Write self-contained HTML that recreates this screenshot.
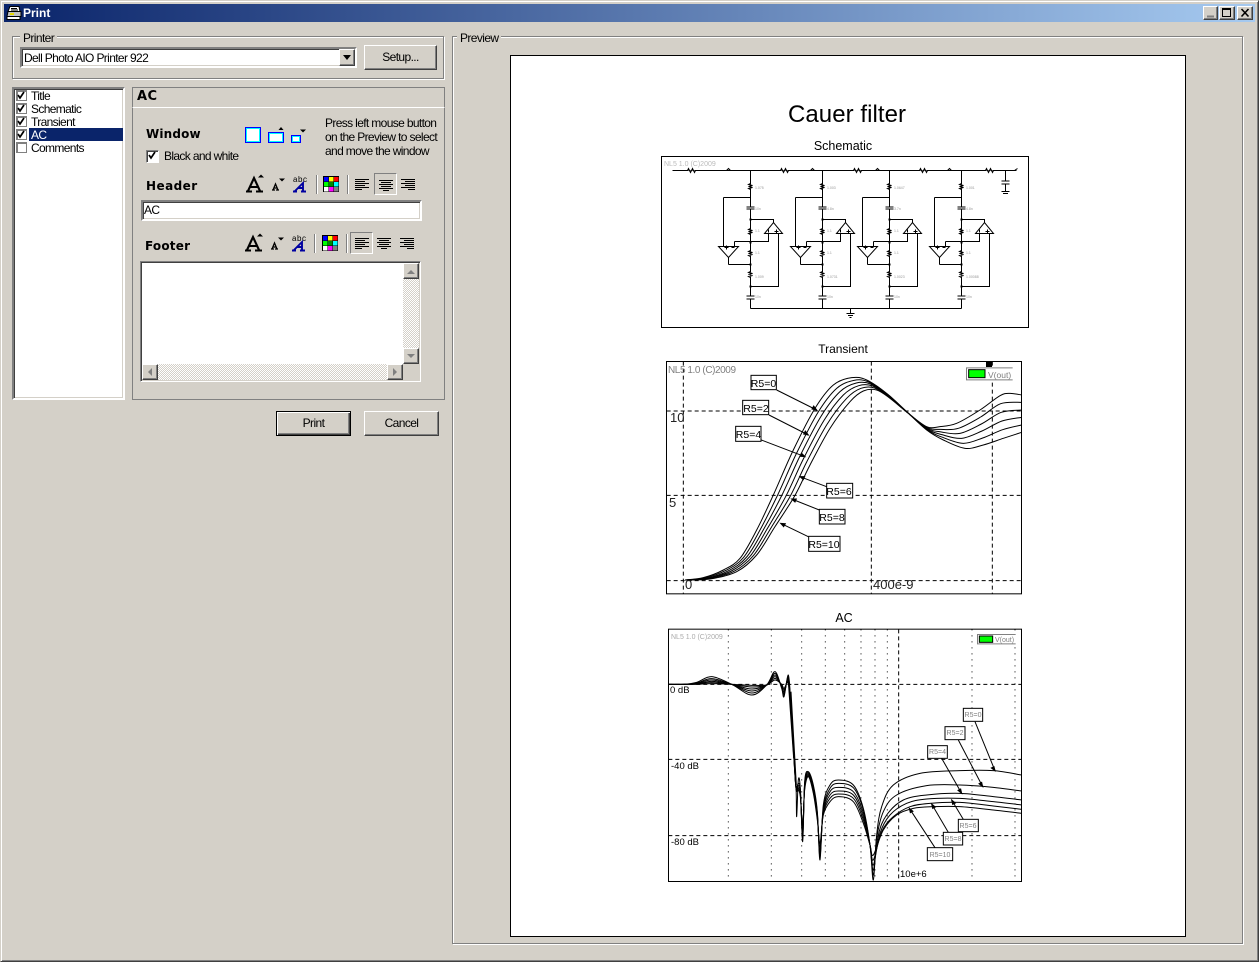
<!DOCTYPE html>
<html><head><meta charset="utf-8"><title>Print</title>
<style>
html,body{margin:0;padding:0;width:1259px;height:962px;overflow:hidden;background:#d4d0c8}
body{position:relative;font:12px/14px "Liberation Sans",Arial,sans-serif;color:#000}
.a,.t,.btn,.grp,.sq{position:absolute;box-sizing:border-box}
.t{white-space:nowrap;letter-spacing:-.64px}
.grp{border:1px solid #808080;box-shadow:1px 1px 0 #fff,inset 1px 1px 0 #fff}
.leg{position:absolute;background:#d4d0c8;padding:0 3px;white-space:nowrap;letter-spacing:-.6px}
.btn{background:#d4d0c8;border:1px solid;border-color:#fff #404040 #404040 #fff;box-shadow:inset -1px -1px 0 #808080;text-align:center;letter-spacing:-.6px}
.sunk{border:2px solid;border-color:#808080 #fff #fff #808080;box-shadow:inset 1px 1px 0 #404040,inset -1px -1px 0 #d4d0c8;background:#fff}
.h{font-family:"DejaVu Sans","Liberation Sans",sans-serif;font-weight:bold;font-size:12px;letter-spacing:0}
.sq{width:11px;height:11px;background:#fff;border:1px solid #808080;box-shadow:inset 1px 1px 0 #808080}
.dith{background:repeating-conic-gradient(#d4d0c8 0 25%,#fff 0 50%) 0 0/2px 2px}
.sb{position:absolute;box-sizing:border-box;width:16px;height:16px;background:#d4d0c8;border:1px solid;border-color:#fff #404040 #404040 #fff;box-shadow:inset -1px -1px 0 #808080}
.pressed{position:absolute;box-sizing:border-box;border:1px solid;border-color:#808080 #fff #fff #808080}
svg{position:absolute;left:0;top:0;overflow:visible}
</style></head><body>

<!-- window frame -->
<div class="a" style="left:0;top:0;width:1259px;height:962px;border:1px solid;border-color:#d4d0c8 #404040 #404040 #d4d0c8;box-shadow:inset 1px 1px 0 #fff,inset -1px -1px 0 #808080"></div>
<div class="a" style="left:4px;top:4px;width:1251px;height:18px;background:linear-gradient(90deg,#0a246a,#a6caf0)"></div>
<div class="t" style="left:23px;top:6px;color:#fff;font-weight:bold;font-size:12px;letter-spacing:0">Print</div>
<svg width="30" height="24"><path d="M10 6.500h9l1 5H8z" fill="#fff" stroke="#000"/><path d="M8 11.500h13v5H7z" fill="#c0c0c0" stroke="#000"/><path d="M7 16.500h13v3H7z" fill="#fff" stroke="#000"/><path d="M10 14h4" stroke="#e8d800" stroke-width="2"/><path d="M11 8.500h6M11 10h7" stroke="#000"/></svg>
<div class="sb" style="left:1203px;top:6px;width:15px;height:14px"></div>
<div class="sb" style="left:1219px;top:6px;width:16px;height:14px"></div>
<div class="sb" style="left:1237px;top:6px;width:16px;height:14px"></div>
<svg width="1259" height="24"><path d="M1207 16.500h7" stroke="#808080" stroke-width="2"/><path d="M1222.500 8.500h8v8h-8zM1222 9.500h9" fill="none" stroke="#000"/><path d="M1241.500 9l7 7.500M1248.500 9l-7 7.500" stroke="#000" stroke-width="1.6"/></svg>

<!-- printer group -->
<div class="grp" style="left:12px;top:36px;width:432px;height:43px"></div>
<div class="leg" style="left:20px;top:31px">Printer</div>
<div class="a sunk" style="left:20px;top:47px;width:337px;height:21px"></div>
<div class="t" style="left:24px;top:51px">Dell Photo AIO Printer 922</div>
<div class="sb" style="left:339px;top:49px;width:16px;height:17px"></div>
<svg width="400" height="70"><path d="M343 55h8l-4 5z" fill="#000"/></svg>
<div class="btn" style="left:364px;top:45px;width:73px;height:25px;line-height:22px">Setup...</div>

<!-- list -->
<div class="a sunk" style="left:12px;top:87px;width:113px;height:313px"></div>
<div class="a" style="left:29px;top:128px;width:94px;height:13px;background:#0a246a"></div>
<div class="sq" style="left:16px;top:90px"></div>
<div class="sq" style="left:16px;top:103px"></div>
<div class="sq" style="left:16px;top:116px"></div>
<div class="sq" style="left:16px;top:129px"></div>
<div class="sq" style="left:16px;top:142px"></div>
<svg width="40" height="150"><path d="M18 95l2 3 4-6M18 108l2 3 4-6M18 121l2 3 4-6M18 134l2 3 4-6" fill="none" stroke="#000" stroke-width="1.7"/></svg>
<div class="t" style="left:31px;top:89px">Title</div>
<div class="t" style="left:31px;top:102px">Schematic</div>
<div class="t" style="left:31px;top:115px">Transient</div>
<div class="t" style="left:31px;top:128px;color:#fff">AC</div>
<div class="t" style="left:31px;top:141px">Comments</div>

<!-- panel -->
<div class="a" style="left:132px;top:87px;width:313px;height:21px;border:1px solid;border-color:#808080 #808080 #fff #808080"></div>
<div class="t h" style="left:137px;top:90px;font-size:13px;letter-spacing:.4px">AC</div>
<div class="a" style="left:132px;top:107px;width:313px;height:293px;border:1px solid;border-color:#fff #808080 #808080 #808080;border-top-color:#fff"></div>
<div class="t h" style="left:146px;top:127px;letter-spacing:.15px">Window</div>
<div class="t" style="left:325px;top:116px">Press left mouse button</div>
<div class="t" style="left:325px;top:130px">on the Preview to select</div>
<div class="t" style="left:325px;top:144px">and move the window</div>
<div class="a" style="left:146px;top:150px;width:13px;height:13px;background:#d4d0c8;border:1px solid;border-color:#808080 #fff #fff #808080;box-shadow:inset 1px 1px 0 #404040"></div>
<div class="a" style="left:148px;top:152px;width:10px;height:10px;background:#fff"></div>
<svg width="170" height="170"><path d="M149 155l2 3 4-6" fill="none" stroke="#000" stroke-width="1.7"/></svg>
<div class="t" style="left:164px;top:149px">Black and white</div>
<div class="t h" style="left:146px;top:179px;letter-spacing:.45px">Header</div>
<div class="t h" style="left:145px;top:239px;letter-spacing:.2px">Footer</div>

<!-- window icons -->
<svg width="320" height="150">
<rect x="245.500" y="127.500" width="15" height="15" fill="#fff" stroke="#0000ff"/><rect x="246.500" y="128.500" width="13" height="13" fill="none" stroke="#00ffff"/>
<rect x="268.500" y="132.500" width="15" height="10" fill="#fff" stroke="#0000ff"/><rect x="269.500" y="133.500" width="13" height="8" fill="none" stroke="#00ffff"/>
<path d="M278.500 130h5l-2.500-3z" fill="#000"/>
<rect x="291.500" y="135.500" width="9" height="7" fill="#fff" stroke="#0000ff"/><rect x="292.500" y="136.500" width="7" height="5" fill="none" stroke="#00ffff"/>
<path d="M300 129.500h6l-3 3z" fill="#000"/>
</svg>

<!-- toolbars -->
<svg width="430" height="260">
<g>
<path d="M246 191.500h6M256 191.500h7M248 191l6-13 6 13M250.500 187h7" fill="none" stroke="#000" stroke-width="2.100"/><path d="M258 177.500h6l-3-3z" fill="#000"/>
<path d="M272 190h3M276 190h3M273 190l2.500-6 2.500 6M274 188h3" fill="none" stroke="#000" stroke-width="1.300"/><path d="M279 178.500h6l-3 3z" fill="#000"/>
<path d="M293 191.500h4M301 191.500h5M295 191l8-8v8M298 188h5" fill="none" stroke="#0000a0" stroke-width="1.900"/>
<path d="M316.500 175v19M347.500 175v19" stroke="#808080"/><path d="M317.500 175v19M348.500 175v19" stroke="#fff"/>
</g>
<g transform="translate(-1 59)">
<path d="M246 191.500h6M256 191.500h7M248 191l6-13 6 13M250.500 187h7" fill="none" stroke="#000" stroke-width="2.100"/><path d="M258 177.500h6l-3-3z" fill="#000"/>
<path d="M272 190h3M276 190h3M273 190l2.500-6 2.500 6M274 188h3" fill="none" stroke="#000" stroke-width="1.300"/><path d="M279 178.500h6l-3 3z" fill="#000"/>
<path d="M293 191.500h4M301 191.500h5M295 191l8-8v8M298 188h5" fill="none" stroke="#0000a0" stroke-width="1.900"/>
<path d="M315.500 175v19M347.500 175v19" stroke="#808080"/><path d="M316.500 175v19M348.500 175v19" stroke="#fff"/>
</g>
<text x="293" y="182" font-family="Liberation Sans" font-size="8" fill="#000" textLength="14">abc</text>
<text x="292" y="241" font-family="Liberation Sans" font-size="8" fill="#000" textLength="14">abc</text>
<!-- colour grids -->
<g>
<rect x="323" y="176" width="16" height="16" fill="#000"/>
<rect x="324" y="177" width="4.500" height="4.500" fill="#00f"/><rect x="329" y="177" width="4.500" height="4.500" fill="#ff0"/><rect x="334" y="177" width="4.500" height="4.500" fill="#f00"/>
<rect x="324" y="182" width="4.500" height="4.500" fill="#0f0"/><rect x="329" y="182" width="4.500" height="4.500" fill="#080"/><rect x="334" y="182" width="4.500" height="4.500" fill="#0ff"/>
<rect x="324" y="187" width="4.500" height="4.500" fill="#fff"/><rect x="329" y="187" width="4.500" height="4.500" fill="#f0f"/><rect x="334" y="187" width="4.500" height="4.500" fill="#808080"/>
</g>
<g transform="translate(-1 59)">
<rect x="323" y="176" width="16" height="16" fill="#000"/>
<rect x="324" y="177" width="4.500" height="4.500" fill="#00f"/><rect x="329" y="177" width="4.500" height="4.500" fill="#ff0"/><rect x="334" y="177" width="4.500" height="4.500" fill="#f00"/>
<rect x="324" y="182" width="4.500" height="4.500" fill="#0f0"/><rect x="329" y="182" width="4.500" height="4.500" fill="#080"/><rect x="334" y="182" width="4.500" height="4.500" fill="#0ff"/>
<rect x="324" y="187" width="4.500" height="4.500" fill="#fff"/><rect x="329" y="187" width="4.500" height="4.500" fill="#f0f"/><rect x="334" y="187" width="4.500" height="4.500" fill="#808080"/>
</g>
<!-- align icons -->
<g stroke="#000" fill="none">
<path d="M355 179.500h14M355 181.500h10M355 183.500h14M355 185.500h10M355 187.500h14M355 189.500h7"/>
<path d="M379 180.500h14M381 182.500h10M379 184.500h14M381 186.500h10M379 188.500h14M383 190.500h6"/>
<path d="M401 179.500h14M405 181.500h10M401 183.500h14M405 185.500h10M401 187.500h14M408 189.500h7"/>
<path d="M355 238.500h14M355 240.500h10M355 242.500h14M355 244.500h10M355 246.500h14M355 248.500h7"/>
<path d="M377 238.500h14M379 240.500h10M377 242.500h14M379 244.500h10M377 246.500h14M381 248.500h6"/>
<path d="M400 238.500h14M404 240.500h10M400 242.500h14M404 244.500h10M400 246.500h14M407 248.500h7"/>
</g>
</svg>
<div class="pressed" style="left:374px;top:173px;width:23px;height:22px"></div>
<div class="pressed" style="left:350px;top:232px;width:23px;height:22px"></div>

<!-- header input -->
<div class="a sunk" style="left:141px;top:200px;width:281px;height:21px"></div>
<div class="t" style="left:144px;top:203px">AC</div>

<!-- footer box -->
<div class="a" style="left:140px;top:261px;width:281px;height:121px;border:1px solid;border-color:#808080 #fff #fff #808080;box-shadow:inset 1px 1px 0 #404040"></div>
<div class="a" style="left:142px;top:263px;width:261px;height:101px;background:#fff"></div>
<div class="a dith" style="left:403px;top:263px;width:16px;height:101px"></div>
<div class="a dith" style="left:142px;top:364px;width:261px;height:16px"></div>
<div class="sb" style="left:403px;top:263px"></div>
<div class="sb" style="left:403px;top:348px"></div>
<div class="sb" style="left:142px;top:364px"></div>
<div class="sb" style="left:387px;top:364px"></div>
<svg width="430" height="390"><path d="M407 274h8l-4-4z" fill="#808080"/><path d="M407 354h8l-4 4z" fill="#808080"/><path d="M152 368v8l-4-4z" fill="#808080"/><path d="M393 368v8l4-4z" fill="#808080"/></svg>

<!-- buttons -->
<div class="btn" style="left:276px;top:411px;width:75px;height:25px;line-height:22px;border:1px solid #000;box-shadow:inset 1px 1px 0 #fff,inset -1px -1px 0 #404040,inset -2px -2px 0 #808080">Print</div>
<div class="btn" style="left:364px;top:411px;width:75px;height:25px;line-height:22px">Cancel</div>

<!-- preview group -->
<div class="grp" style="left:452px;top:36px;width:791px;height:908px"></div>
<div class="leg" style="left:457px;top:31px">Preview</div>
<div class="a" style="left:510px;top:55px;width:676px;height:882px;background:#fff;border:1px solid #000"></div>

<svg width="1259" height="962" font-family="Liberation Sans,sans-serif">
<text x="847" y="122" font-size="24" text-anchor="middle" textLength="118">Cauer filter</text>
<text x="843" y="150" font-size="12.500" text-anchor="middle">Schematic</text>
<text x="843" y="353" font-size="12" text-anchor="middle">Transient</text>
<text x="844" y="622" font-size="12.500" text-anchor="middle">AC</text>

<!-- SCHEMATIC -->
<g transform="translate(.5 .5)" fill="none" stroke="#000">
<rect x="661" y="156" width="367" height="171"/>
<path d="M672 170H1016M750 308H961M850 308v5M846 313h8M847.500 315h5M849 317h2M1005 170v10M1001 180.500h8M1001 183.500h8M1005 184v7M1001 191h8M1002.500 193h5" />
<path d="M687 170l1-2 2 4 2-4 2 4 1-2M780 170l1-2 2 4 2-4 2 4 1-2M853 170l1-2 2 4 2-4 2 4 1-2M919 170l1-2 2 4 2-4 2 4 1-2M985 170l1-2 2 4 2-4 2 4 1-2" fill="#fff"/>
<path d="M726 170l2-2 2 2M810 170l2-2 2 2M875 170l2-2 2 2M947 170l2-2 2 2M1014 170l3-2"/>
<g transform="translate(750 0)">
<path d="M0 170V206M-4 206.500h8M-4 208.500h8M0 209V295M-4 295.500h8M-4 298.500h8M0 299V308"/>
<path d="M-27 197H0M-27 197V246M-22 264H0M-22 257V264M-16 241H0M-16 241V246M-32 246H-12L-22 257ZM0 219H23V222M14 233H32L23 222ZM18 233V241H0M28 233V286H0"/>
<path d="M0 183l-2 1 4 1-4 1 4 1-4 1 2 1M0 228l-2 1 4 1-4 1 4 1-4 1 2 1M0 250l-2 1 4 1-4 1 4 1-4 1 2 1M0 271l-2 1 4 1-4 1 4 1-4 1 2 1" fill="#fff"/>
<path d="M-26 247h4M-24 245v4M-19 247h3M24 231h4M26 229v4M18 229v3"/>
<path d="M-1 219h2M-1 242h2M-1 264h2M-1 286h2" stroke-width="2"/>
</g>
<g transform="translate(822 0)">
<path d="M0 170V206M-4 206.500h8M-4 208.500h8M0 209V295M-4 295.500h8M-4 298.500h8M0 299V308"/>
<path d="M-27 197H0M-27 197V246M-22 264H0M-22 257V264M-16 241H0M-16 241V246M-32 246H-12L-22 257ZM0 219H23V222M14 233H32L23 222ZM18 233V241H0M28 233V286H0"/>
<path d="M0 183l-2 1 4 1-4 1 4 1-4 1 2 1M0 228l-2 1 4 1-4 1 4 1-4 1 2 1M0 250l-2 1 4 1-4 1 4 1-4 1 2 1M0 271l-2 1 4 1-4 1 4 1-4 1 2 1" fill="#fff"/>
<path d="M-26 247h4M-24 245v4M-19 247h3M24 231h4M26 229v4M18 229v3"/>
<path d="M-1 219h2M-1 242h2M-1 264h2M-1 286h2" stroke-width="2"/>
</g>
<g transform="translate(889 0)">
<path d="M0 170V206M-4 206.500h8M-4 208.500h8M0 209V295M-4 295.500h8M-4 298.500h8M0 299V308"/>
<path d="M-27 197H0M-27 197V246M-22 264H0M-22 257V264M-16 241H0M-16 241V246M-32 246H-12L-22 257ZM0 219H23V222M14 233H32L23 222ZM18 233V241H0M28 233V286H0"/>
<path d="M0 183l-2 1 4 1-4 1 4 1-4 1 2 1M0 228l-2 1 4 1-4 1 4 1-4 1 2 1M0 250l-2 1 4 1-4 1 4 1-4 1 2 1M0 271l-2 1 4 1-4 1 4 1-4 1 2 1" fill="#fff"/>
<path d="M-26 247h4M-24 245v4M-19 247h3M24 231h4M26 229v4M18 229v3"/>
<path d="M-1 219h2M-1 242h2M-1 264h2M-1 286h2" stroke-width="2"/>
</g>
<g transform="translate(961 0)">
<path d="M0 170V206M-4 206.500h8M-4 208.500h8M0 209V295M-4 295.500h8M-4 298.500h8M0 299V308"/>
<path d="M-27 197H0M-27 197V246M-22 264H0M-22 257V264M-16 241H0M-16 241V246M-32 246H-12L-22 257ZM0 219H23V222M14 233H32L23 222ZM18 233V241H0M28 233V286H0"/>
<path d="M0 183l-2 1 4 1-4 1 4 1-4 1 2 1M0 228l-2 1 4 1-4 1 4 1-4 1 2 1M0 250l-2 1 4 1-4 1 4 1-4 1 2 1M0 271l-2 1 4 1-4 1 4 1-4 1 2 1" fill="#fff"/>
<path d="M-26 247h4M-24 245v4M-19 247h3M24 231h4M26 229v4M18 229v3"/>
<path d="M-1 219h2M-1 242h2M-1 264h2M-1 286h2" stroke-width="2"/>
</g>
</g>
<text x="664" y="166" font-size="7" fill="#bbb">NL5 1.0 (C)2009</text>
<g font-size="3.500" fill="#999">
<text x="755" y="189">1.075</text><text x="755" y="210">10n</text><text x="755" y="232">1.1</text><text x="755" y="254">1.1</text><text x="755" y="278">1.009</text><text x="755" y="298">10n</text>
<text x="827" y="189">1.003</text><text x="827" y="210">4.8n</text><text x="827" y="232">1.1</text><text x="827" y="254">1.1</text><text x="827" y="278">1.0731</text><text x="827" y="298">10n</text>
<text x="894" y="189">1.0647</text><text x="894" y="210">3.7n</text><text x="894" y="232">1.1</text><text x="894" y="254">1.1</text><text x="894" y="278">1.0023</text><text x="894" y="298">10n</text>
<text x="966" y="189">1.001</text><text x="966" y="210">4.8n</text><text x="966" y="232">1.1</text><text x="966" y="254">1.1</text><text x="966" y="278">1.00088</text><text x="966" y="298">10n</text>
</g>

<!-- TRANSIENT -->
<g transform="translate(660 355) scale(.33333)" fill="none" stroke="#000" stroke-width="3">
<rect x="19.500" y="19.500" width="1065" height="697"/>
<path d="M70 20V716M634 20V716M997 20V716M20 168H1085M20 421H1085M20 677H1085" stroke-dasharray="12 9"/>
<polyline class="sm" points="75,675 130,668 190,645 240,610 290,525 340,420 400,285 465,160 520,90 575,68 620,75 680,115 740,170 800,225 850,255 915,280 970,270 1030,250 1085,232"/>
<polyline class="sm" points="75,675 134,669 198,646 250,608 301,523 353,420 410,294 474,172 530,100 582,76 626,81 682,118 741,171 800,223 848,247 910,265 968,249 1028,224 1085,210"/>
<polyline class="sm" points="75,675 138,670 206,647 260,606 312,521 366,420 420,303 483,184 540,110 589,84 632,87 684,121 742,172 800,221 846,239 905,250 966,228 1026,198 1085,187"/>
<polyline class="sm" points="75,675 142,670 214,648 270,604 323,519 379,421 430,312 492,196 550,120 596,92 638,93 686,124 743,173 800,219 844,231 900,235 964,207 1024,172 1085,165"/>
<polyline class="sm" points="75,675 146,671 222,649 280,602 334,517 392,421 440,321 501,208 560,130 603,100 644,99 688,127 744,174 800,217 842,223 895,220 962,186 1022,146 1085,142"/>
<polyline class="sm" points="75,675 150,672 230,650 290,600 345,515 405,421 450,330 510,220 570,140 610,108 650,105 690,130 745,175 800,215 840,215 890,205 960,165 1020,122 1050,115 1085,120"/>
<path d="M350 105L470 165M327 180L445 240M304 255L435 305M500 395L420 365M478 465L395 432M445 545L362 505"/>
<path d="M470 165l-14-3 5-9zM445 240l-14-3 5-9zM435 305l-14-1 4-9zM420 365l14 0-4 9zM395 432l14 0-4 9zM362 505l14 1-5 9z" fill="#000"/>
<g fill="#fff"><rect x="273" y="61" width="76" height="43"/><rect x="248" y="136" width="78" height="43"/><rect x="227" y="214" width="76" height="45"/><rect x="500" y="385" width="78" height="44"/><rect x="478" y="463" width="77" height="44"/><rect x="446" y="544" width="94" height="45"/></g>
<rect x="920" y="38" width="138" height="37" stroke="none" fill="#fff"/>
<path d="M1058 38.500H919.500V74.500H1058" stroke="#808080"/>
<rect x="926" y="44" width="49" height="24" fill="#00ff00" stroke="#000"/>
<rect x="978" y="18" width="18" height="18" fill="#000" stroke="none"/>
</g>
<g font-size="10.500" text-anchor="middle">
<text x="763.500" y="387">R5=0</text><text x="756" y="412">R5=2</text><text x="748.500" y="438">R5=4</text>
<text x="839" y="495">R5=6</text><text x="832" y="521">R5=8</text><text x="824" y="548">R5=10</text>
</g>
<text x="668" y="373" font-size="10" fill="#808080" textLength="68">NL5 1.0 (C)2009</text>
<text x="988" y="378" font-size="8.500" fill="#808080">V(out)</text>
<g font-size="13" fill="#222"><text x="670" y="422">10</text><text x="669" y="507">5</text><text x="685" y="589">0</text><text x="873" y="589">400e-9</text></g>

<!-- AC -->
<g transform="translate(660 625) scale(.33333)" fill="none" stroke="#000" stroke-width="3">
<rect x="25.500" y="12.500" width="1059" height="757"/>
<path d="M205 13V770M334 13V770M425 13V770M496 13V770M554 13V770M603 13V770M645 13V770M682 13V770M936 13V770M1065 13V770" stroke-dasharray="3 15"/>
<path d="M716 13V770M25 178H1085M25 403H1085M25 632H1085" stroke-dasharray="12 9"/>
<polyline class="sm" points="25,178 70,178 110,172 155,155 215,178 275,210 320,180 345,140 365,190 372,215 385,150 392,230 400,350 408,480 410,575 415,465 421,490 428,650 434,470 445,440 460,480 472,560 480,705 490,540 510,480 535,465 580,480 610,550 630,660 640,765 650,630 665,545 700,480 780,445 900,437 1000,437 1085,450"/>
<polyline class="sm" points="25,178 70,178 110,174 155,161 215,178 275,204 320,180 345,145 365,188 372,210 385,155 392,235 400,355 408,480 415,475 421,495 428,640 434,475 445,443 460,485 472,565 480,695 490,550 510,490 535,475 580,488 610,555 630,660 640,750 650,640 670,560 710,510 800,482 900,480 1000,487 1085,498"/>
<polyline class="sm" points="25,178 70,178 110,175 155,165 215,178 275,198 320,180 345,150 365,185 372,205 385,160 392,240 400,360 408,485 415,480 421,500 428,630 434,480 445,446 460,490 472,570 480,685 490,555 510,500 535,487 580,500 610,565 630,660 640,735 655,630 680,570 730,525 800,510 900,505 1000,515 1085,525"/>
<polyline class="sm" points="25,178 70,178 110,176 155,169 215,178 275,192 320,180 345,155 365,183 372,200 385,165 392,245 400,365 408,490 415,485 421,505 428,620 434,485 445,449 460,495 472,575 480,675 490,560 510,510 535,498 580,510 610,575 630,660 640,720 660,625 690,570 740,535 800,522 900,520 1000,530 1085,540"/>
<polyline class="sm" points="25,178 70,178 110,177 155,173 215,178 275,186 320,180 345,160 365,180 372,195 385,170 392,250 400,370 408,490 415,490 421,510 428,610 434,490 445,452 460,500 472,580 480,665 490,565 510,520 535,507 580,520 610,585 630,660 640,705 665,620 700,575 750,545 810,535 900,532 1000,543 1085,553"/>
<polyline class="sm" points="25,178 70,178 110,178 155,176 215,178 275,181 320,180 345,165 365,178 372,190 385,175 392,255 400,375 408,490 415,495 421,515 428,600 434,495 445,455 460,505 472,585 480,655 490,570 510,530 535,515 580,530 610,595 630,660 640,690 670,615 710,570 760,550 820,545 900,545 1000,555 1085,565"/>
<path d="M392 200L408 480M386 170L402 400" stroke-width="5"/>
<path d="M945 290L1005 437M895 345L968 485M845 400L905 505M910 583L875 525M865 622L815 537M825 668L748 550"/>
<path d="M1005 437l-11-8 8-4zM968 485l-11-9 8-4zM905 505l-11-9 8-4zM875 525l11 9-8 4zM815 537l11 9-8 4zM748 550l11 9-8 4z" fill="#000"/>
<g fill="#fff"><rect x="910" y="250" width="58" height="39"/><rect x="855" y="305" width="60" height="39"/><rect x="803" y="362" width="59" height="38"/><rect x="895" y="583" width="60" height="37"/><rect x="850" y="622" width="58" height="38"/><rect x="802" y="668" width="76" height="39"/></g>
<rect x="953" y="28" width="114" height="29" stroke="none" fill="#fff"/>
<path d="M1067 28.500H952.500V56.500H1067" stroke="#808080"/>
<rect x="958" y="33" width="40" height="19" fill="#00ff00" stroke="#000"/>
</g>
<g font-size="7" text-anchor="middle" fill="#808080">
<text x="973" y="717">R5=0</text><text x="955" y="735">R5=2</text><text x="937.500" y="754">R5=4</text>
<text x="968" y="828">R5=6</text><text x="953" y="841">R5=8</text><text x="940" y="857">R5=10</text>
</g>
<text x="671" y="639" font-size="7" fill="#aaa">NL5 1.0 (C)2009</text>
<text x="995" y="642" font-size="7" fill="#808080">V(out)</text>
<g font-size="9.500"><text x="670" y="693">0 dB</text><text x="671" y="769">-40 dB</text><text x="671" y="845">-80 dB</text><text x="900" y="877">10e+6</text></g>
</svg>
<script>
document.querySelectorAll('polyline.sm').forEach(function(l){
  var p=l.getAttribute('points').trim().split(/\s+/).map(function(s){return s.split(',').map(Number)});
  var d='M'+p[0][0]+' '+p[0][1];
  for(var i=0;i<p.length-1;i++){
    var a=p[i-1]||p[i],b=p[i],c=p[i+1],e=p[i+2]||c;
    d+='C'+(b[0]+(c[0]-a[0])/6).toFixed(1)+' '+(b[1]+(c[1]-a[1])/6).toFixed(1)+' '+(c[0]-(e[0]-b[0])/6).toFixed(1)+' '+(c[1]-(e[1]-b[1])/6).toFixed(1)+' '+c[0]+' '+c[1];
  }
  var n=document.createElementNS('http://www.w3.org/2000/svg','path');
  n.setAttribute('d',d);
  l.parentNode.replaceChild(n,l);
});
</script>
</body></html>
